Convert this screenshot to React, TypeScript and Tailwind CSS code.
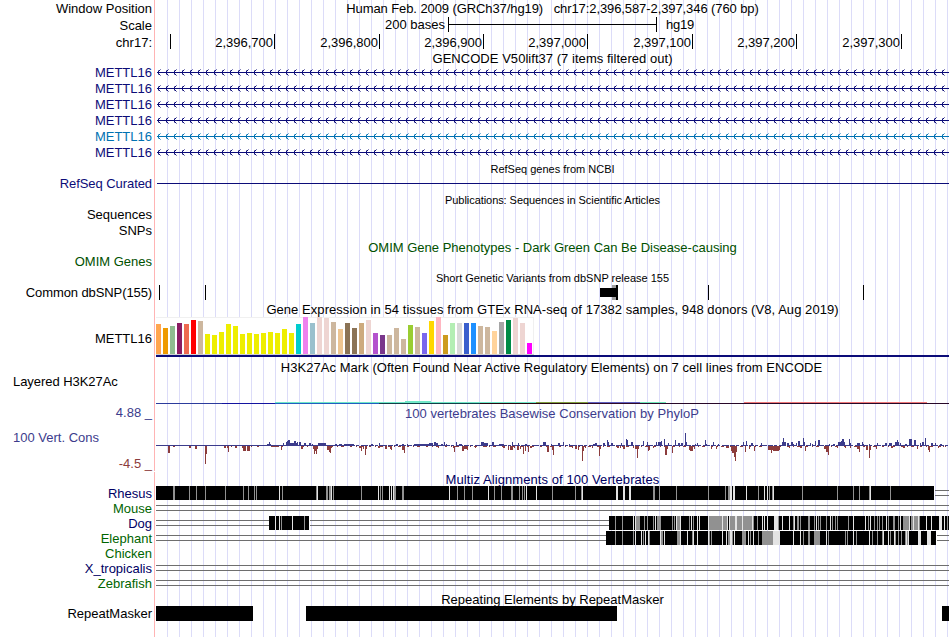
import React from 'react';

type Span = [number, number, number];

const ORIGIN = 156;
const TRACK_WIDTH = 793;

const transcripts = ['#0c0c78', '#0c0c78', '#0c0c78', '#0c0c78', '#0072b2', '#0c0c78'];

const rulerTicks = [
  { width: 15, text: '' },
  { width: 104, text: '2,396,700' },
  { width: 105, text: '2,396,800' },
  { width: 104, text: '2,396,900' },
  { width: 104, text: '2,397,000' },
  { width: 105, text: '2,397,100' },
  { width: 104, text: '2,397,200' },
  { width: 105, text: '2,397,300' }
];

// one entry per GTEx tissue: colour and bar height
const tissues: [string, number][] = [
  ['#ffa54f', 30], ['#ee9a00', 26], ['#8fbc8f', 28], ['#8b1c62', 31], ['#ee6a50', 30], ['#ff0000', 34],
  ['#cdb79e', 33], ['#eeee00', 20], ['#eeee00', 19], ['#eeee00', 22], ['#eeee00', 30], ['#eeee00', 28],
  ['#eeee00', 20], ['#eeee00', 21], ['#eeee00', 20], ['#eeee00', 21], ['#eeee00', 22], ['#eeee00', 21],
  ['#eeee00', 25], ['#eeee00', 21], ['#00cdcd', 30], ['#ee82ee', 37], ['#9ac0cd', 31], ['#eed5d2', 37],
  ['#eed5d2', 36], ['#cdb79e', 32], ['#eec591', 25], ['#8b7355', 31], ['#8b7355', 26], ['#cdaa7d', 31],
  ['#eed5d2', 34], ['#b452cd', 21], ['#7a378b', 19], ['#cdb79e', 19], ['#cdb79e', 26], ['#cdb79e', 15],
  ['#9acd32', 29], ['#cdb79e', 27], ['#7a67ee', 21], ['#ffd700', 33], ['#ffb6c1', 37], ['#cd9b1d', 19],
  ['#b4eeb4', 31], ['#d9d9d9', 31], ['#3a5fcd', 31], ['#1e90ff', 31], ['#cdb79e', 28], ['#cdb79e', 27],
  ['#ffd39b', 23], ['#a6a6a6', 32], ['#008b45', 34], ['#eed5d2', 36], ['#eed5d2', 31], ['#ff00ff', 11]
];

// [x, width, height] of the conserved (up) and fast-evolving (down) bars
const conserved: Span[] = [
  [267, 2, 2], [269, 1, 4], [270, 1, 2], [283, 1, 3], [286, 1, 4], [287, 1, 5], [288, 2, 6], [290, 4, 3],
  [294, 2, 5], [296, 1, 3], [297, 1, 4], [299, 2, 4], [304, 2, 3], [309, 2, 3], [312, 1, 2], [318, 8, 3],
  [335, 2, 2], [339, 3, 2], [344, 10, 2], [371, 2, 2], [379, 1, 3], [396, 2, 2], [402, 2, 2], [407, 1, 2],
  [414, 15, 2], [429, 4, 3], [434, 2, 4], [436, 2, 3], [441, 2, 2], [444, 1, 4], [446, 1, 2], [456, 1, 4],
  [459, 3, 2], [481, 3, 4], [484, 4, 3], [492, 2, 4], [499, 5, 2], [512, 1, 4], [518, 1, 3], [525, 2, 2],
  [543, 3, 4], [551, 1, 2], [558, 2, 3], [563, 1, 4], [569, 1, 2], [593, 2, 2], [595, 2, 3], [603, 2, 3],
  [607, 1, 6], [608, 1, 4], [611, 2, 3], [621, 1, 3], [626, 1, 7], [627, 1, 6], [631, 2, 4], [643, 1, 5],
  [647, 1, 4], [656, 1, 4], [658, 3, 4], [661, 1, 5], [664, 1, 7], [668, 1, 3], [675, 1, 6], [678, 2, 3],
  [681, 2, 3], [685, 1, 13], [686, 1, 4], [695, 1, 2], [697, 1, 3], [705, 1, 6], [706, 1, 2], [713, 1, 4],
  [718, 1, 2], [743, 1, 4], [746, 1, 5], [751, 2, 3], [761, 1, 3], [782, 1, 4], [783, 1, 8], [784, 2, 4],
  [787, 2, 3], [791, 2, 4], [793, 1, 2], [796, 1, 3], [798, 2, 5], [803, 1, 8], [804, 1, 4], [810, 1, 3],
  [812, 1, 2], [815, 1, 5], [818, 2, 6], [829, 1, 2], [833, 2, 2], [838, 3, 4], [841, 1, 5], [842, 2, 7],
  [844, 1, 4], [849, 1, 7], [850, 1, 3], [857, 3, 3], [862, 1, 4], [863, 1, 2], [869, 1, 2], [877, 1, 3],
  [885, 2, 3], [889, 3, 3], [895, 2, 4], [897, 1, 6], [898, 1, 4], [900, 1, 3], [905, 2, 2], [909, 3, 7],
  [914, 2, 6], [920, 1, 3], [922, 2, 4], [925, 1, 8], [931, 2, 3], [935, 1, 3], [940, 2, 2]
];

const accelerated: Span[] = [
  [168, 2, 7], [173, 2, 1], [189, 2, 2], [195, 2, 3], [205, 1, 18], [206, 1, 8], [224, 2, 2], [227, 1, 2],
  [228, 1, 6], [231, 1, 1], [235, 2, 2], [242, 1, 2], [243, 3, 5], [247, 3, 5], [251, 1, 1], [257, 2, 1],
  [271, 8, 1], [281, 1, 4], [282, 1, 1], [301, 2, 3], [303, 1, 1], [307, 1, 1], [313, 1, 3], [314, 1, 8],
  [315, 1, 5], [316, 1, 8], [317, 1, 3], [327, 2, 4], [329, 1, 6], [330, 1, 7], [331, 1, 2], [359, 2, 2],
  [361, 1, 5], [363, 1, 3], [365, 1, 9], [366, 1, 3], [378, 2, 2], [382, 1, 1], [385, 2, 3], [390, 2, 3],
  [391, 1, 4], [402, 2, 4], [404, 1, 7], [438, 1, 2], [453, 1, 2], [454, 1, 6], [457, 2, 1], [462, 2, 5],
  [464, 3, 3], [467, 1, 4], [475, 1, 2], [485, 2, 1], [503, 2, 2], [508, 1, 4], [510, 3, 4], [514, 1, 2],
  [517, 2, 4], [520, 1, 3], [523, 1, 8], [525, 1, 5], [528, 1, 6], [530, 2, 2], [547, 2, 6], [552, 1, 4],
  [553, 1, 9], [572, 1, 2], [575, 2, 3], [578, 1, 4], [582, 1, 15], [583, 1, 5], [585, 1, 2], [592, 1, 2],
  [599, 1, 10], [600, 1, 3], [617, 2, 2], [620, 1, 2], [623, 2, 3], [633, 1, 2], [635, 2, 3], [637, 1, 12],
  [638, 1, 3], [648, 1, 5], [649, 1, 4], [653, 1, 2], [665, 2, 9], [667, 1, 3], [672, 1, 7], [689, 1, 4],
  [690, 3, 5], [694, 1, 3], [711, 1, 3], [716, 1, 3], [722, 1, 1], [726, 3, 2], [731, 1, 5], [732, 2, 7],
  [734, 1, 11], [735, 1, 15], [736, 1, 6], [745, 1, 6], [749, 1, 3], [754, 1, 5], [759, 3, 1], [768, 12, 4],
  [771, 1, 7], [773, 6, 5], [789, 1, 2], [800, 2, 2], [805, 1, 5], [824, 2, 3], [826, 2, 6], [828, 1, 9],
  [837, 1, 2], [845, 1, 2], [850, 1, 2], [857, 2, 3], [859, 1, 6], [866, 2, 4], [869, 1, 12], [870, 1, 4],
  [876, 1, 3], [891, 2, 2], [903, 2, 2], [917, 1, 3], [928, 2, 4], [929, 1, 6], [938, 1, 2], [943, 1, 1]
];

interface Alignment {
  name: string;
  color: string;
  gaps: [number, number][];
  blocks: [number, number][];
  grey: [number, number][];
  light: [number, number][];
}

const green = '#006400';
const navy = '#000064';

const alignments: Alignment[] = [
  {
    name: 'Rhesus',
    color: navy,
    gaps: [[935, 949]],
    blocks: [[156, 934]],
    grey: [
      [173, 2], [189, 1], [196, 1], [205, 1], [225, 1], [243, 1], [248, 1], [254, 1], [256, 1], [282, 1],
      [316, 1], [326, 2], [329, 2], [333, 1], [361, 1], [380, 1], [382, 1], [394, 2], [402, 2], [457, 1],
      [464, 1], [472, 1], [494, 1], [501, 1], [511, 2], [519, 1], [522, 1], [524, 1], [552, 1], [575, 1],
      [581, 1], [653, 2], [659, 1], [676, 1], [708, 1], [725, 1], [728, 2], [758, 1], [769, 1], [772, 1],
      [802, 1], [837, 1], [853, 1], [859, 1], [869, 1], [890, 1]
    ],
    light: [
      [279, 1], [317, 1], [331, 1], [378, 1], [389, 1], [391, 1], [393, 1], [449, 1], [488, 1], [526, 1],
      [536, 1], [582, 1], [616, 2], [623, 2], [629, 2], [730, 2], [733, 2], [746, 1], [764, 1], [767, 1],
      [773, 1], [870, 1]
    ]
  },
  { name: 'Mouse', color: green, gaps: [[156, 949]], blocks: [], grey: [], light: [] },
  {
    name: 'Dog',
    color: navy,
    gaps: [[156, 269], [310, 609]],
    blocks: [[269, 309], [609, 949]],
    grey: [
      [281, 1], [304, 1], [615, 1], [622, 1], [636, 4], [644, 1], [647, 1], [653, 1], [657, 4], [672, 1],
      [674, 1], [677, 3], [689, 1], [693, 1], [709, 13], [723, 4], [730, 5], [737, 5], [743, 9], [753, 1],
      [757, 1], [778, 1], [793, 1], [797, 2], [800, 1], [808, 2], [814, 1], [818, 1], [820, 1], [826, 1],
      [832, 1], [835, 1], [837, 1], [848, 1], [868, 1], [874, 1], [877, 1], [879, 1], [882, 1], [888, 1],
      [893, 2], [898, 1], [903, 6], [911, 2], [914, 4], [919, 1], [947, 1]
    ],
    light: [
      [275, 1], [279, 1], [292, 1], [633, 1], [635, 1], [655, 1], [676, 1], [680, 1], [691, 1], [697, 1],
      [699, 1], [708, 1], [722, 1], [727, 1], [729, 1], [735, 2], [742, 1], [752, 1], [762, 1], [764, 1],
      [767, 1], [774, 4], [782, 1], [789, 1], [794, 1], [816, 1], [830, 1], [853, 1], [865, 1], [870, 1],
      [886, 1], [900, 1], [909, 1], [913, 1], [918, 1], [926, 1], [931, 1], [939, 3], [944, 1]
    ]
  },
  {
    name: 'Elephant',
    color: green,
    gaps: [[156, 606], [937, 949]],
    blocks: [[606, 936]],
    grey: [
      [615, 1], [622, 1], [633, 1], [643, 1], [649, 1], [661, 2], [677, 3], [692, 1], [709, 1], [711, 1],
      [728, 2], [732, 1], [742, 4], [750, 1], [758, 1], [762, 11], [803, 1], [808, 2], [814, 6], [828, 1],
      [845, 1], [847, 1], [856, 1], [872, 1], [877, 1], [882, 1], [890, 1], [895, 1], [898, 1], [901, 1],
      [905, 1], [907, 1]
    ],
    light: [
      [635, 1], [641, 1], [645, 1], [648, 1], [660, 1], [664, 1], [680, 1], [687, 1], [693, 1], [697, 1],
      [708, 1], [722, 1], [726, 1], [730, 2], [734, 1], [748, 1], [753, 1], [773, 7], [793, 1], [800, 1],
      [826, 1], [853, 1], [869, 1], [883, 1], [888, 1], [894, 1], [906, 1], [908, 1], [918, 3], [927, 4]
    ]
  },
  { name: 'Chicken', color: green, gaps: [], blocks: [], grey: [], light: [] },
  { name: 'X_tropicalis', color: navy, gaps: [[156, 949]], blocks: [], grey: [], light: [] },
  { name: 'Zebrafish', color: green, gaps: [[156, 949]], blocks: [], grey: [], light: [] }
];

// [x start, x end, y, height, colour] inside the H3K27Ac track
const h3k27ac: [number, number, number, number, string][] = [
  [156, 222, 27, 1, '#2c3c9c'],
  [222, 275, 27, 1, '#1414a0'],
  [275, 379, 27, 1, '#2060c0'],
  [379, 480, 27, 1, '#104048'],
  [480, 588, 27, 1, '#280810'],
  [588, 640, 27, 1, '#300828'],
  [640, 949, 27, 1, '#280828'],
  [275, 405, 26, 1, '#70e8c8'],
  [405, 431, 25, 2, '#70e8c8'],
  [431, 536, 26, 1, '#70e8c8'],
  [536, 588, 26, 1, '#80a040'],
  [588, 640, 26, 1, '#6060c0'],
  [640, 666, 26, 1, '#70e8b8'],
  [744, 927, 26, 1, '#f07878']
];

const Row = ({ label, color = '#000', height, labelClass = '', children }: {
  label?: React.ReactNode;
  color?: string;
  height: string;
  labelClass?: string;
  children?: React.ReactNode;
}) => (
  <div className={`flex ${height}`}>
    <div className="w-[156px] shrink-0 bg-white pr-px">
      <div
        className={`flex h-full items-center justify-end border-r border-[#ffb4b4] pr-[2px] ${labelClass}`}
        style={{ color }}
      >
        {label}
      </div>
    </div>
    <div className="flex-1 min-w-0">{children}</div>
  </div>
);

const Title = ({ text, className = '' }: { text: string; className?: string }) => (
  <div className={`flex h-full items-center justify-center ${className}`}>{text}</div>
);

const Plot = ({ height, children }: { height: number; children: React.ReactNode }) => (
  <svg
    className="block"
    width={TRACK_WIDTH}
    height={height}
    viewBox={`${ORIGIN} 0 ${TRACK_WIDTH} ${height}`}
    shapeRendering="crispEdges"
  >
    {children}
  </svg>
);

const Transcript = ({ color }: { color: string }) => {
  const arrows = Array.from({ length: 99 }, (_, i) => 157 + i * 8);
  return (
    <Plot height={16}>
      <rect x={157} y={7} width={792} height={1} fill={color} />
      <g fill={color}>
        {arrows.map(x => (
          <path key={x} d={`M${x + 1} 6h1v3h-1zM${x + 2} 5h1v1h-1zM${x + 2} 9h1v1h-1z`} />
        ))}
      </g>
      <g fill={color} opacity={0.5}>
        {arrows.map(x => (
          <path
            key={x}
            d={`M${x + 3} 4h1v1h-1zM${x + 3} 10h1v1h-1zM${x + 1} 5h1v1h-1zM${x + 1} 9h1v1h-1z`}
          />
        ))}
      </g>
    </Plot>
  );
};

const AlignmentPlot = ({ track }: { track: Alignment }) => (
  <Plot height={15}>
    {track.gaps.map(([from, to]) => (
      <path key={from} d={`M${from} 4H${to}V5H${from}zM${from} 9H${to}V10H${from}z`} fill="#6e6e6e" />
    ))}
    {track.blocks.map(([from, to]) => <rect key={from} x={from} width={to - from} height={14} />)}
    {track.grey.map(([x, w]) => <rect key={x} x={x} width={w} height={14} fill="#919191" />)}
    {track.light.map(([x, w]) => <rect key={x} x={x} width={w} height={14} fill="#e4e4e4" />)}
  </Plot>
);

const App = () => {
  return (
    <div className="h-[637px] w-[950px] overflow-hidden bg-white">
      <main className="flex h-[637px] w-[949px] flex-col whitespace-pre bg-[linear-gradient(90deg,#dcdcf8_1px,transparent_1px)] bg-[length:12px_100%] bg-[position:11px_0] font-['Liberation_Sans',Arial,sans-serif] text-[13px] leading-none text-black">
        <Row label="Window Position" height="h-[17px]">
          <Title
            text="Human Feb. 2009 (GRCh37/hg19)   chr17:2,396,587-2,397,346 (760 bp)"
            className="pb-px tracking-[-0.09px]"
          />
        </Row>
        <Row label="Scale" height="h-[17px]">
          <div className="flex h-[15px] items-center">
            <span className="w-[292px] pr-[3px] text-right">200 bases</span>
            <span className="flex h-[15px] w-[209px] items-center border-x border-black">
              <span className="h-px w-full bg-black" />
            </span>
            <span className="pl-[9px] tracking-[-0.2px]">hg19</span>
          </div>
        </Row>
        <Row label="chr17:" height="h-[17px]">
          <div className="flex h-[15px]">
            {rulerTicks.map((tick, i) => (
              <div
                key={i}
                className="flex shrink-0 items-center justify-end border-r border-black pr-px pt-[2px]"
                style={{ width: tick.width }}
              >
                {tick.text}
              </div>
            ))}
          </div>
        </Row>

        <Row height="h-[14px]">
          <Title text="GENCODE V50lift37 (7 items filtered out)" className="tracking-[0.04px]" />
        </Row>
        {transcripts.map((color, i) => (
          <Row key={i} label="METTL16" color={color} height="h-4" labelClass="pb-[2px]">
            <Transcript color={color} />
          </Row>
        ))}

        <Row height="h-4">
          <Title text="RefSeq genes from NCBI" className="text-[11px]" />
        </Row>
        <Row label="RefSeq Curated" color="#0c0c78" height="h-[14px]" labelClass="pb-[2px] tracking-[-0.07px]">
          <Plot height={14}>
            <rect x={157} y={6} width={792} height={1} fill="#0c0c78" />
          </Plot>
        </Row>

        <Row height="h-[17px]">
          <Title
            text="Publications: Sequences in Scientific Articles"
            className="pt-[2px] text-[11px] tracking-[-0.06px]"
          />
        </Row>
        <Row label="Sequences" height="h-[14px]" labelClass="pb-[2px]" />
        <Row label="SNPs" height="h-4" />

        <Row height="h-[17px]">
          <Title
            text="OMIM Gene Phenotypes - Dark Green Can Be Disease-causing"
            className="pt-[2px] text-[#005000]"
          />
        </Row>
        <Row label="OMIM Genes" color="#005000" height="h-[14px]" labelClass="pb-[2px]" />

        <Row height="h-4">
          <Title text="Short Genetic Variants from dbSNP release 155" className="pt-[3px] text-[11px]" />
        </Row>
        <Row label="Common dbSNP(155)" height="h-[15px]" labelClass="tracking-[-0.1px]">
          <Plot height={15}>
            <rect x={159} width={1} height={15} />
            <rect x={205} width={1} height={15} />
            <rect x={612} width={4} height={15} fill="#a0a0a0" />
            <rect x={600} y={3} width={16} height={9} />
            <rect x={616} width={2} height={15} />
            <rect x={708} width={1} height={15} />
            <rect x={863} width={1} height={15} />
          </Plot>
        </Row>

        <Row height="h-[17px]">
          <Title
            text="Gene Expression in 54 tissues from GTEx RNA-seq of 17382 samples, 948 donors (V8, Aug 2019)"
            className="pt-[2px] tracking-[0.055px]"
          />
        </Row>
        <Row label="METTL16" height="h-10" labelClass="pt-[2px]">
          <Plot height={40}>
            <rect x={156} width={378} height={38} fill="#f0f0f0" />
            <rect x={156} y={1} width={377} height={36} fill="#fff" />
            <rect x={156} y={37} width={378} height={1} fill="#d0d0d0" />
            {tissues.map(([color, height], i) => (
              <rect key={i} x={ORIGIN + i * 7} y={37 - height} width={5} height={height} fill={color} />
            ))}
            <rect x={156} y={38} width={793} height={2} fill="#0c0c78" />
          </Plot>
        </Row>

        <Row height="h-[19px]">
          <Title
            text="H3K27Ac Mark (Often Found Near Active Regulatory Elements) on 7 cell lines from ENCODE"
            className="pt-px pr-[2px] tracking-[0.045px]"
          />
        </Row>
        <Row
          height="h-[30px]"
          label={<span className="-mt-[3px] h-full w-full pl-[13px] tracking-[-0.05px]">Layered H3K27Ac</span>}
        >
          <Plot height={30}>
            {h3k27ac.map(([from, to, y, h, fill], i) => (
              <rect key={i} x={from} y={y} width={to - from} height={h} fill={fill} />
            ))}
          </Plot>
        </Row>

        <Row label="4.88 _" color="#3c3c8c" height="h-[14px]" labelClass="pb-px">
          <Title
            text="100 vertebrates Basewise Conservation by PhyloP"
            className="pt-px pr-px tracking-[0.04px] text-[#3c3c8c]"
          />
        </Row>
        <Row
          height="h-[52px]"
          color="#3c3c8c"
          labelClass="relative -mt-px"
          label={
            <div className="flex h-full w-full flex-col justify-between pb-px pt-[12px]">
              <span className="pl-[13px]">100 Vert. Cons</span>
              <span className="text-right text-[#8c3c3c]">-4.5 _</span>
            </div>
          }
        >
          <Plot height={52}>
            <rect x={156} y={25} width={175} height={1} fill="#3c3c8c" />
            <line x1={331} x2={949} y1={25.5} y2={25.5} stroke="#3c3c8c" strokeDasharray="5 1 3 2 7 1" />
            <line x1={331} x2={949} y1={26.5} y2={26.5} stroke="#8c3c3c" strokeDasharray="2 4 1 3 3 6" />
            {accelerated.map(([x, w, h]) => (
              <rect key={x} x={x} y={26} width={w} height={h} fill="#8c3c3c" />
            ))}
            {conserved.map(([x, w, h]) => (
              <rect key={x} x={x} y={26 - h} width={w} height={h} fill="#3c3c8c" />
            ))}
          </Plot>
        </Row>

        <Row height="h-[14px]">
          <Title text="Multiz Alignments of 100 Vertebrates" className="pt-px tracking-[0.08px] text-[#000064]" />
        </Row>
        {alignments.map(track => (
          <Row key={track.name} label={track.name} color={track.color} height="h-[15px]">
            <AlignmentPlot track={track} />
          </Row>
        ))}

        <Row height="h-[15px]">
          <Title text="Repeating Elements by RepeatMasker" className="pt-px" />
        </Row>
        <Row label="RepeatMasker" height="h-[15px]">
          <Plot height={15}>
            <rect x={156} width={97} height={15} />
            <rect x={306} width={311} height={15} />
            <rect x={942} width={7} height={15} />
          </Plot>
        </Row>
        <Row height="flex-1" />
      </main>
    </div>
  );
};

export default App;
